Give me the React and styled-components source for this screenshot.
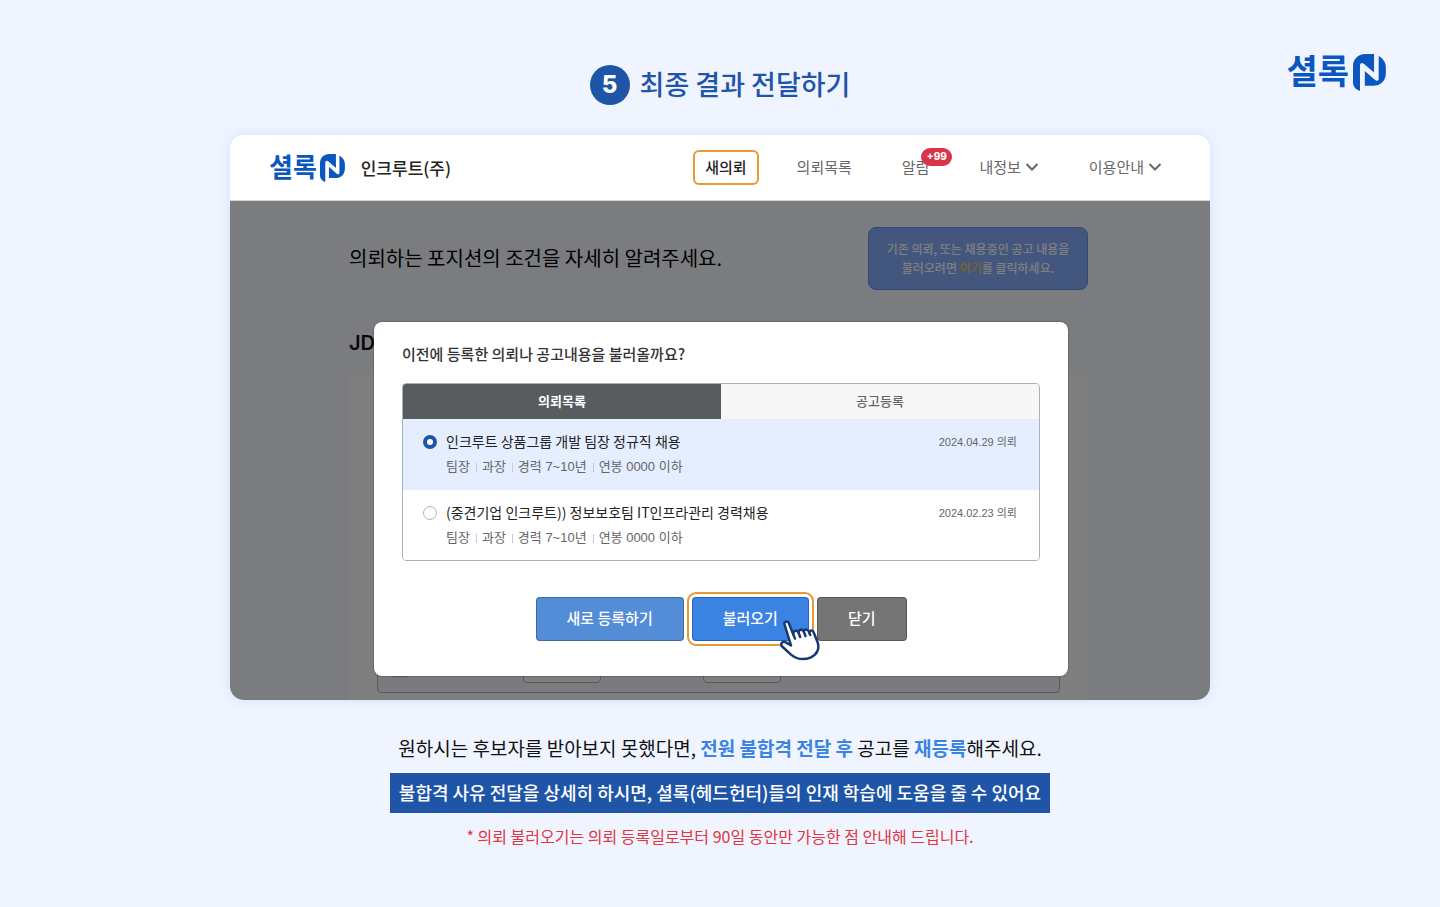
import React, { useState } from "react";
import styled, { createGlobalStyle, css } from "styled-components";

const colors = {
  page: "#eff4ff",
  navy: "#1f55a6",
  brand: "#0a57bf",
  accent: "#3b83e3",
  orange: "#e8973a",
  red: "#e0363f",
  badge: "#d93549",
  line: "#a6b1c4",
};

const GlobalStyle = createGlobalStyle`
  * {
    box-sizing: border-box;
  }

  body {
    margin: 0;
    background: ${colors.page};
    font-family: "Noto Sans CJK KR", sans-serif;
    color: #111;
  }

  h1, h2, p, ul {
    margin: 0;
    padding: 0;
  }

  button, input {
    font-family: inherit;
  }
`;

const Page = styled.main`
  min-height: 100vh;
  padding: 54px 0 40px;
`;

const PageHeader = styled.header`
  display: grid;
  grid-template-columns: 1fr auto 1fr;
  align-items: start;
  padding: 0 54px;
  margin-bottom: 30px;
`;

const StepTitle = styled.h1`
  grid-column: 2;
  display: flex;
  align-items: flex-start;
  gap: 10px;
  height: 40px;
  margin-top: 11px;
  color: ${colors.navy};
  font-size: 27px;
  font-weight: 500;
  line-height: 38px;
`;

const StepNumber = styled.span`
  width: 40px;
  height: 40px;
  border-radius: 50%;
  background: ${colors.navy};
  color: #fff;
  font-family: Inter, sans-serif;
  font-size: 24px;
  font-weight: 800;
  line-height: 40px;
  text-align: center;
`;

const LogoLink = styled.a`
  display: flex;
  align-items: center;
  justify-self: end;
  gap: ${({ $small }) => ($small ? 3 : 4)}px;
  height: ${({ $small }) => ($small ? 28 : 37)}px;
  color: ${colors.brand};
  font-size: ${({ $small }) => ($small ? 26 : 34)}px;
  font-weight: 700;
  line-height: 1;
  text-decoration: none;
`;

const LogoText = styled.span`
  padding-bottom: ${({ $small }) => ($small ? 4 : 6)}px;
`;

const LogoMark = styled.svg`
  height: 100%;
  fill: currentColor;
`;

const Screen = styled.section`
  width: 100%;
  max-width: 980px;
  margin: 0 auto;
  border-radius: 14px;
  overflow: hidden;
  box-shadow: 0 0 12px rgba(80, 120, 220, 0.16);
`;

const TopBar = styled.div`
  display: flex;
  align-items: center;
  gap: 16px;
  height: 66px;
  padding: 0 36px 0 39px;
  border-bottom: 1px solid #d5d8d8;
  background: #fff;
`;

const Company = styled.strong`
  font-size: 17px;
  font-weight: 500;
  color: #222;
`;

const Nav = styled.nav`
  display: flex;
  gap: 26px;
  margin-left: auto;
`;

const NavLink = styled.a`
  position: relative;
  display: flex;
  align-items: center;
  gap: 4px;
  height: 35px;
  padding: 0 10px 2px;
  border: 2px solid transparent;
  border-radius: 6px;
  color: #666;
  font-size: 15px;
  text-decoration: none;

  ${({ $active }) =>
    $active &&
    css`
      border-color: ${colors.orange};
      color: #222;
      font-weight: 500;
    `}
`;

const Badge = styled.span`
  position: absolute;
  top: -4px;
  right: -13px;
  width: 31px;
  height: 18px;
  border-radius: 9px;
  background: ${colors.badge};
  color: #fff;
  font-family: Inter, sans-serif;
  font-size: 10px;
  font-weight: 800;
  line-height: 17px;
  text-align: center;
`;

const ScreenBody = styled.div`
  position: relative;
  display: flex;
  flex-direction: column;
  min-height: 499px;
  padding: 26px 122px 0 119px;
  background: #f7f8ff;
`;

const Intro = styled.div`
  display: flex;
  align-items: center;
  justify-content: space-between;
`;

const IntroText = styled.p`
  padding-bottom: 2px;
  font-size: 20px;
  line-height: 30px;
  color: #000;
`;

const Notice = styled.div`
  width: 220px;
  padding: 11px 0 12px;
  border: 1px solid #6a90dc;
  border-radius: 8px;
  background: #86aefc;
  color: #fff;
  font-size: 12px;
  font-weight: 500;
  line-height: 19px;
  text-align: center;
`;

const NoticeLink = styled.a`
  color: #f6c84a;
  text-decoration: none;
`;

const SectionTitle = styled.h2`
  margin: 38px 0 17px;
  font-family: Inter, "Noto Sans CJK KR", sans-serif;
  font-size: 20px;
  font-weight: 600;
  line-height: 30px;
`;

const FormCard = styled.div`
  flex: 1;
  display: flex;
  flex-direction: column;
  justify-content: flex-end;
  padding: 0 28px 7px;
  border-radius: 8px 8px 0 0;
  background: #fff;
`;

const FieldRow = styled.div`
  display: grid;
  grid-template-columns: 131px 78px 78px;
  align-items: end;
  height: 56px;
  padding: 0 14px 9px;
  border: 1px solid #a9b2c4;
  border-radius: 4px;
  background: #f5f6ff;

  input:last-child {
    margin-left: 102px;
  }
`;

const FieldMark = styled.span`
  width: 16px;
  height: 2px;
  margin-bottom: 6px;
  background: #b8bcc8;
`;

const FieldInput = styled.input`
  width: 78px;
  height: 32px;
  border: 1px solid #a9b2c4;
  border-radius: 4px;
  background: #fff;
`;

const Overlay = styled.div`
  position: absolute;
  inset: 0;
  display: flex;
  justify-content: center;
  align-items: flex-start;
  padding: 121px 0 0 2px;
  background: rgba(0, 0, 0, 0.5);
`;

const Modal = styled.div`
  width: 694px;
  max-width: 100%;
  padding: 17px 28px 35px;
  border-radius: 8px;
  background: #fff;
  box-shadow: 0 0 2px rgba(0, 0, 0, 0.5);
`;

const ModalTitle = styled.h2`
  margin-bottom: 14px;
  color: #333;
  font-size: 15px;
  font-weight: 500;
  line-height: 30px;
`;

const Panel = styled.div`
  border: 1px solid ${colors.line};
  border-radius: 4px;
  overflow: hidden;
`;

const Tabs = styled.div`
  display: grid;
  grid-template-columns: 1fr 1fr;
`;

const Tab = styled.button`
  height: 35px;
  padding: 0 0 3px;
  border: 0;
  background: ${({ $active }) => ($active ? "#585c5f" : "#f7f7f7")};
  color: ${({ $active }) => ($active ? "#fff" : "#666")};
  font-size: 13px;
  font-weight: ${({ $active }) => ($active ? 700 : 500)};
`;

const RequestRow = styled.label`
  display: grid;
  grid-template-columns: 14px 1fr auto;
  column-gap: 9px;
  height: ${({ $last }) => ($last ? 70 : 71)}px;
  padding: 10px 22px 0 20px;
  background: ${({ $selected }) => ($selected ? "#e5eeff" : "#fff")};
`;

const Radio = styled.input`
  appearance: none;
  width: 14px;
  height: 14px;
  margin: 6px 0 0;
  border: 1px solid #b5b5b5;
  border-radius: 50%;
  background: #fff;

  &:checked {
    border: 4px solid ${colors.navy};
  }
`;

const RequestName = styled.span`
  display: block;
  color: #222;
  font-size: 14px;
  line-height: 24px;
`;

const Meta = styled.span`
  display: flex;
  color: #666;
  font-family: "Liberation Sans", "Noto Sans CJK KR", sans-serif;
  font-size: 13px;
  line-height: 28px;
`;

const MetaItem = styled.span`
  display: flex;
  align-items: center;

  & + &::before {
    content: "";
    width: 1px;
    height: 9px;
    margin: 0 5px 0 6px;
    background: #bccbe6;
  }
`;

const RequestDate = styled.span`
  color: #666;
  font-family: "Liberation Sans", "Noto Sans CJK KR", sans-serif;
  font-size: 11px;
  line-height: 26px;
`;

const Actions = styled.div`
  display: flex;
  justify-content: center;
  gap: 8px;
  margin-top: 36px;
`;

const ActionButton = styled.button`
  position: relative;
  height: 44px;
  padding: 0 30px 3px;
  border: 1px solid rgba(0, 0, 0, 0.25);
  border-radius: 4px;
  background: ${({ $color }) => $color};
  color: #fff;
  font-size: 15px;
  font-weight: 500;
  white-space: nowrap;

  ${({ $focus }) =>
    $focus &&
    css`
      outline: 2px solid ${colors.orange};
      outline-offset: 3px;
    `}
`;

const Hand = styled.svg`
  position: absolute;
  right: -13px;
  bottom: -22px;
  z-index: 1;
`;

const Guide = styled.footer`
  display: flex;
  flex-direction: column;
  align-items: center;
  margin-top: 33px;
  text-align: center;
`;

const GuideText = styled.p`
  font-size: 19px;
  line-height: 30px;

  strong {
    color: ${colors.accent};
    font-weight: 700;
  }
`;

const GuideBanner = styled.p`
  width: 660px;
  max-width: 100%;
  margin: 10px 0 8px;
  padding-bottom: 2px;
  background: ${colors.navy};
  color: #fff;
  font-size: 18px;
  font-weight: 500;
  line-height: 38px;
`;

const GuideNote = styled.p`
  color: ${colors.red};
  font-size: 16px;
  line-height: 30px;
`;

const requests = [
  {
    id: 1,
    name: "인크루트 상품그룹 개발 팀장 정규직 채용",
    meta: ["팀장", "과장", "경력 7~10년", "연봉 0000 이하"],
    date: "2024.04.29 의뢰",
  },
  {
    id: 2,
    name: "(중견기업 인크루트)) 정보보호팀 IT인프라관리 경력채용",
    meta: ["팀장", "과장", "경력 7~10년", "연봉 0000 이하"],
    date: "2024.02.23 의뢰",
  },
];

function Logo({ small }) {
  return (
    <LogoLink href="#" $small={small}>
      <LogoText $small={small}>셜록</LogoText>
      <LogoMark viewBox="0 0 32 36" aria-hidden="true">
        <path d="M12 0H20.5V18L10.5 9.4C8.5 7.8 6.8 9 6.8 11.2V36C2.5 34.6 0 31.5 0 27.5V12C0 5 5 0 12 0Z" />
        <path d="M25 2C29.5 4.5 32 8.500 32 13V18.500C32 26 27 31 19.500 31H11.500V16.500L21.500 25.300C23.300 26.800 25 26 25 23.800Z" />
      </LogoMark>
    </LogoLink>
  );
}

function Chevron() {
  return (
    <svg width="14" height="10" viewBox="0 0 14 10" fill="none" aria-hidden="true">
      <path d="M1.500 2L7 7.500L12.500 2" stroke="#666" strokeWidth="2" />
    </svg>
  );
}

function HandCursor() {
  return (
    <Hand width="42" height="43" viewBox="0 0 42 43" aria-hidden="true">
      <path
        d="M5.500 5.500C4.600 2.600 8.600 1.200 9.800 4.100L14.200 15.200C14.200 11.600 18 10.700 19.400 13.300C19.600 10.300 23.400 9.600 24.700 12.400C25.200 9.900 28.700 9.600 29.700 12.400L30.200 13.600C30.500 11.200 33.500 10.800 34.600 13.200L38.400 22.800C41 29.500 38 35.700 32 38.300C25 41.200 18 40.500 12 35.600L3.200 27.500C1 25.300 3.200 21.800 6.300 23.200L12 26.400Z"
        fill="#fff"
        stroke="#17396f"
        strokeWidth="2.500"
        strokeLinejoin="round"
      />
      <path
        d="M14.200 15.200L16 19.600M19.400 13.300L21.200 18M24.700 12.400L26.500 17M30.200 13.600L31.200 16"
        fill="none"
        stroke="#17396f"
        strokeWidth="2.500"
        strokeLinecap="round"
      />
    </Hand>
  );
}

function RequestModal() {
  const [selected, setSelected] = useState(1);
  const [tab, setTab] = useState("의뢰목록");

  return (
    <Modal role="dialog" aria-labelledby="modal-title">
      <ModalTitle id="modal-title">이전에 등록한 의뢰나 공고내용을 불러올까요?</ModalTitle>
      <Panel>
        <Tabs role="tablist">
          {["의뢰목록", "공고등록"].map((name) => (
            <Tab
              key={name}
              type="button"
              role="tab"
              aria-selected={tab === name}
              $active={tab === name}
              onClick={() => setTab(name)}
            >
              {name}
            </Tab>
          ))}
        </Tabs>
        {requests.map((item, index) => (
          <RequestRow
            key={item.id}
            $selected={selected === item.id}
            $last={index === requests.length - 1}
          >
            <Radio
              type="radio"
              name="request"
              checked={selected === item.id}
              onChange={() => setSelected(item.id)}
            />
            <span>
              <RequestName>{item.name}</RequestName>
              <Meta>
                {item.meta.map((text) => (
                  <MetaItem key={text}>{text}</MetaItem>
                ))}
              </Meta>
            </span>
            <RequestDate>{item.date}</RequestDate>
          </RequestRow>
        ))}
      </Panel>
      <Actions>
        <ActionButton type="button" $color="#548dd7">
          새로 등록하기
        </ActionButton>
        <ActionButton type="button" $color={colors.accent} $focus>
          불러오기
          <HandCursor />
        </ActionButton>
        <ActionButton type="button" $color="#757575">
          닫기
        </ActionButton>
      </Actions>
    </Modal>
  );
}

function App() {
  return (
    <>
      <GlobalStyle />
      <Page>
        <PageHeader>
          <StepTitle>
            <StepNumber>5</StepNumber>
            최종 결과 전달하기
          </StepTitle>
          <Logo />
        </PageHeader>

        <Screen>
          <TopBar>
            <Logo small />
            <Company>인크루트(주)</Company>
            <Nav>
              <NavLink href="#" $active>
                새의뢰
              </NavLink>
              <NavLink href="#">의뢰목록</NavLink>
              <NavLink href="#">
                알림
                <Badge>+99</Badge>
              </NavLink>
              <NavLink href="#">
                내정보
                <Chevron />
              </NavLink>
              <NavLink href="#">
                이용안내
                <Chevron />
              </NavLink>
            </Nav>
          </TopBar>

          <ScreenBody>
            <Intro>
              <IntroText>의뢰하는 포지션의 조건을 자세히 알려주세요.</IntroText>
              <Notice>
                기존 의뢰, 또는 채용중인 공고 내용을
                <br />
                불러오려면 <NoticeLink href="#">여기</NoticeLink>를 클릭하세요.
              </Notice>
            </Intro>
            <SectionTitle>JD</SectionTitle>
            <FormCard>
              <FieldRow>
                <FieldMark />
                <FieldInput aria-label="최소" />
                <FieldInput aria-label="최대" />
              </FieldRow>
            </FormCard>
            <Overlay>
              <RequestModal />
            </Overlay>
          </ScreenBody>
        </Screen>

        <Guide>
          <GuideText>
            원하시는 후보자를 받아보지 못했다면, <strong>전원 불합격 전달 후</strong> 공고를{" "}
            <strong>재등록</strong>해주세요.
          </GuideText>
          <GuideBanner>
            불합격 사유 전달을 상세히 하시면, 셜록(헤드헌터)들의 인재 학습에 도움을 줄 수 있어요
          </GuideBanner>
          <GuideNote>
            * 의뢰 불러오기는 의뢰 등록일로부터 90일 동안만 가능한 점 안내해 드립니다.
          </GuideNote>
        </Guide>
      </Page>
    </>
  );
}

export default App;
